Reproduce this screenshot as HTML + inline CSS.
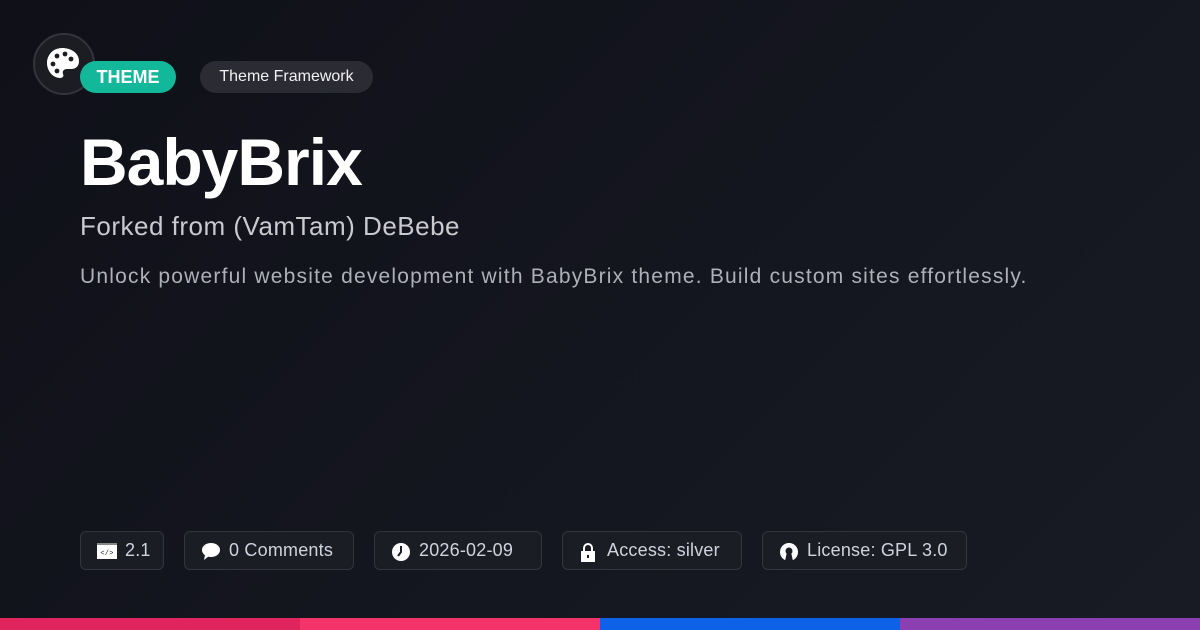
<!DOCTYPE html>
<html><head><meta charset="utf-8"><style>
*{margin:0;padding:0;box-sizing:border-box}
body{width:1200px;height:630px;overflow:hidden;background:linear-gradient(135deg,#0f1018 0%,#151720 60%,#181a24 100%);font-family:"Liberation Sans",sans-serif;color:#fff;position:relative}
.logo{position:absolute;left:33px;top:33px;width:62px;height:62px;border-radius:50%;background:#1c1d23;border:2px solid #34353b;z-index:1}
.theme{position:absolute;left:80px;top:61px;width:96px;height:32px;border-radius:16px;background:#13b89b;color:#fff;font-weight:bold;font-size:18px;line-height:32px;text-align:center;padding-left:0;z-index:2}
.fw{position:absolute;left:200px;top:61px;width:173px;height:32px;border-radius:16px;background:#2a2b33;color:#f1f1f1;font-size:16px;line-height:32px;text-align:center}
h1{position:absolute;left:80px;top:124px;font-size:66px;font-weight:bold;letter-spacing:-1px}
.sub{position:absolute;left:80px;top:211px;font-size:26px;color:#c9cad0;letter-spacing:0.5px}
.desc{position:absolute;left:80px;top:265px;font-size:21px;color:#aeb0b8;letter-spacing:1.2px}
.tag{position:absolute;top:531px;height:39px;border:1px solid #33353e;border-radius:6px;background:#1b1d25;color:#cfd3de;font-size:18px;line-height:37px;padding-left:44px;letter-spacing:0.2px}
.tag svg{position:absolute;left:16px;top:10px}
.bar{position:absolute;bottom:0;height:12px;width:300px}
</style></head><body>
<div class="logo"><svg width="58" height="58" viewBox="0 0 58 58"><path d="M27 13c-9 0-15 7-15 15 0 8 6 15 13 15 3 0 4-2 3-4-1-3 1-5 4-5h4c5 0 8-3 8-8 0-8-8-13-17-13z" fill="#fff"/><circle cx="22" cy="21" r="2.4" fill="#1c1d23"/><circle cx="30" cy="19" r="2.4" fill="#1c1d23"/><circle cx="18" cy="29" r="2.4" fill="#1c1d23"/><circle cx="22" cy="36" r="2.4" fill="#1c1d23"/><circle cx="36" cy="24" r="2.4" fill="#1c1d23"/></svg></div>
<div class="theme">THEME</div>
<div class="fw">Theme Framework</div>
<h1>BabyBrix</h1>
<div class="sub">Forked from (VamTam) DeBebe</div>
<div class="desc">Unlock powerful website development with BabyBrix theme. Build custom sites effortlessly.</div>
<div class="tag" style="left:80px;width:84px"><svg width="20" height="18" viewBox="0 0 20 18"><rect x="0" y="1" width="20" height="16" fill="#fff"/><rect x="0" y="1" width="20" height="2" fill="#888"/><text x="10" y="13" font-size="7" fill="#222" text-anchor="middle" font-family="Liberation Mono">&lt;/&gt;</text></svg>2.1</div>
<div class="tag" style="left:184px;width:170px"><svg width="20" height="20" viewBox="0 0 20 20"><ellipse cx="10" cy="8" rx="9" ry="7" fill="#fff"/><path d="M4 13l-1 5 5-4z" fill="#fff"/></svg>0 Comments</div>
<div class="tag" style="left:374px;width:168px"><svg width="20" height="20" viewBox="0 0 20 20"><circle cx="10" cy="10" r="9" fill="#fff"/><path d="M10 4v6l-3 4" stroke="#1b1d25" stroke-width="2" fill="none"/></svg>2026-02-09</div>
<div class="tag" style="left:562px;width:180px"><svg width="18" height="20" viewBox="0 0 18 20"><path d="M5 9V6a4 4 0 018 0v3" stroke="#fff" stroke-width="2" fill="none"/><rect x="2" y="9" width="14" height="11" fill="#fff"/><rect x="8" y="13" width="2" height="3" fill="#1b1d25"/></svg>Access: silver</div>
<div class="tag" style="left:762px;width:205px"><svg width="20" height="20" viewBox="0 0 20 20"><circle cx="10" cy="10" r="9" fill="#fff"/><circle cx="10" cy="9" r="3.5" fill="#1b1d25"/><path d="M8 10l-2 9h8l-2-9z" fill="#1b1d25"/></svg>License: GPL 3.0</div>
<div class="bar" style="left:0;background:#e0245e"></div>
<div class="bar" style="left:300px;background:#f5336b"></div>
<div class="bar" style="left:600px;background:#0d62e8"></div>
<div class="bar" style="left:900px;background:#8c3fb0"></div>
</body></html>
